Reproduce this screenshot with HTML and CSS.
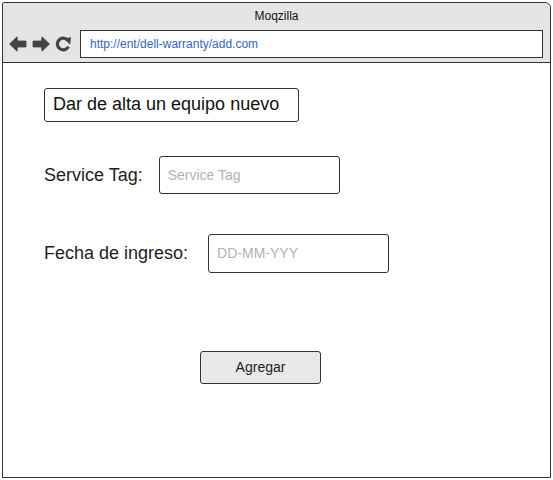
FILE: index.html
```html
<!DOCTYPE html>
<html>
<head>
<meta charset="utf-8">
<link rel="stylesheet" href="styles.css">
</head>
<body>
<div class="window">
  <div class="chrome">
    <div class="title">Moqzilla</div>
    <div class="navrow">
      <div class="navicons">
        <svg class="ic" width="18" height="16" viewBox="0 0 18 16"><path d="M0.5 8 L8 0.8 L8.5 5 L17 5 L17 11 L8.5 11 L8 15.2 Z" fill="#444" stroke="#444" stroke-width="0.8" stroke-linejoin="round"/></svg>
        <svg class="ic" width="18" height="16" viewBox="0 0 18 16"><path d="M17.5 8 L10 0.8 L9.5 5 L1 5 L1 11 L9.5 11 L10 15.2 Z" fill="#444" stroke="#444" stroke-width="0.8" stroke-linejoin="round"/></svg>
        <svg class="ic" width="17" height="16" viewBox="0 0 17 16"><path d="M13.4 10.6 A5.8 5.8 0 1 1 12.6 4.2" fill="none" stroke="#444" stroke-width="3.2"/><path d="M8.6 2.6 L16 1.2 L15.2 8.8 Z" fill="#444"/></svg>
      </div>
      <div class="url">http://ent/dell-warranty/add.com</div>
    </div>
  </div>
  <div class="content">
    <div class="heading">Dar de alta un equipo nuevo</div>
    <div class="row row-tag">
      <span class="label">Service Tag:</span>
      <div class="field field-tag">Service Tag</div>
    </div>
    <div class="row row-date">
      <span class="label">Fecha de ingreso:</span>
      <div class="field field-date">DD-MM-YYY</div>
    </div>
    <div class="btn">Agregar</div>
  </div>
</div>
</body>
</html>
```
FILE: styles.css
```css
html, body { margin: 0; padding: 0; background: #fff; }
body { font-family: "Liberation Sans", Arial, sans-serif; color: #222; }
.window {
  margin: 2px 0 0 2px;
  width: 547px;
  height: 474px;
  border: 1px solid #333;
  border-radius: 2px 6px 0 0;
  box-sizing: content-box;
  display: flex;
  flex-direction: column;
}
.chrome {
  background: #e5e5e5;
  height: 59px;
  border-bottom: 1px solid #333;
  border-radius: 2px 6px 0 0;
  display: flex;
  flex-direction: column;
}
.title {
  text-align: center;
  font-size: 12px;
  line-height: 14px;
  padding-top: 6px;
  color: #111;
}
.navrow {
  display: flex;
  align-items: center;
  margin-top: 7px;
  padding-left: 6px;
}
.navicons { display: flex; gap: 5px; align-items: center; width: 71px; }
.ic { display: block; }
.url {
  height: 26px;
  border: 1px solid #333;
  background: #fff;
  font-size: 12px;
  line-height: 26px;
  color: #3366cc;
  padding-left: 9px;
  box-sizing: content-box;
  width: 452px;
}
.content {
  padding: 25px 0 0 41px;
  display: flex;
  flex-direction: column;
  align-items: flex-start;
}
.heading {
  border: 1px solid #333;
  border-radius: 3px;
  font-size: 18px;
  line-height: 31px;
  padding-left: 8px;
  box-sizing: border-box;
  width: 255px;
  height: 34px;
  color: #111;
}
.row { display: flex; align-items: center; }
.row-tag { margin-top: 34px; }
.row-date { margin-top: 40px; }
.label { font-size: 18px; color: #222; }
.field {
  border: 1px solid #333;
  border-radius: 3px;
  height: 38px;
  width: 181px;
  box-sizing: border-box;
  font-size: 14px;
  line-height: 36px;
  color: #b3b3b3;
  padding-left: 8px;
}
.field-tag { margin-left: 16px; height: 38px; }
.field-date { margin-left: 20px; height: 39px; line-height: 37px; }
.btn {
  margin-top: 78px;
  margin-left: 156px;
  width: 121px;
  height: 33px;
  box-sizing: border-box;
  border: 1px solid #333;
  border-radius: 3px;
  background: #e8e8e8;
  font-size: 14px;
  line-height: 31px;
  text-align: center;
  color: #222;
}
```
